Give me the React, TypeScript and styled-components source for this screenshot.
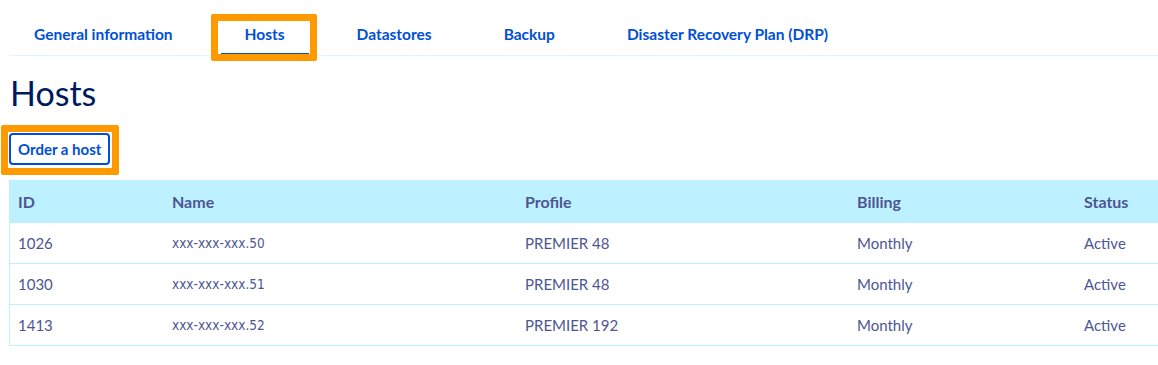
import React from "react";
import styled, { createGlobalStyle } from "styled-components";

const Global = createGlobalStyle`
  html, body { margin: 0; padding: 0; background: #fff; overflow: hidden; }
  body { font-family: Lato, "Noto Sans", "Liberation Sans", sans-serif; }
  * { box-sizing: border-box; }
`;

const Page = styled.div`
  padding-left: 9px;
  width: 1158px;
`;

const TabList = styled.nav`
  display: flex;
  gap: 24px;
  padding-left: 1px;
  border-bottom: 1px solid #e3f4fb;
`;

const Tab = styled.a<{ $active?: boolean }>`
  position: relative;
  display: block;
  padding: 24px 24px 9px;
  font-size: 15.5px;
  line-height: 20px;
  font-weight: 700;
  color: #0050d7;
  text-decoration: none;
  border-bottom: 3px solid ${(p) => (p.$active ? "#0050d7" : "transparent")};
  margin-bottom: -1px;
  white-space: nowrap;
`;

const Highlight = styled.span<{ $t: number; $r: number; $b: number; $l: number }>`
  position: absolute;
  top: ${(p) => p.$t}px;
  right: ${(p) => p.$r}px;
  bottom: ${(p) => p.$b}px;
  left: ${(p) => p.$l}px;
  border: 7px solid #ff9900;
  border-radius: 2px;
  pointer-events: none;
`;

const Title = styled.h1`
  margin: 15px 0 0 1px;
  font-size: 34px;
  line-height: 44px;
  font-weight: 400;
  color: #00185e;
`;

const ButtonWrap = styled.div`
  position: relative;
  display: inline-block;
  margin-top: 18px;
`;

const OutlineButton = styled.button`
  display: block;
  height: 32px;
  padding: 0 7px;
  border: 2px solid #0050d7;
  border-radius: 4px;
  background: #fff;
  color: #0050d7;
  font-family: Lato, "Noto Sans", sans-serif;
  font-size: 15px;
  font-weight: 700;
  line-height: 28px;
`;

const Table = styled.div`
  margin-top: 15px;
  border-left: 1px solid #bef1ff;
`;

const cols = "154px 353px 332px 227px 1fr";

const HeadRow = styled.div`
  display: grid;
  grid-template-columns: ${cols};
  height: 43px;
  align-items: center;
  background: #bef1ff;
  margin-left: -1px;
`;

const HeadCell = styled.div`
  padding-left: 9px;
  font-size: 16px;
  font-weight: 700;
  color: #4d5693;
`;

const Row = styled.div`
  display: grid;
  grid-template-columns: ${cols};
  height: 41px;
  align-items: center;
  border-bottom: 1px solid #bef1ff;
  margin-left: -1px;
  padding-left: 1px;
`;

const Cell = styled.div<{ $mono?: boolean }>`
  padding-left: 8px;
  font-family: ${(p) =>
    p.$mono
      ? '"DejaVu Sans Condensed", "DejaVu Sans", Verdana, sans-serif'
      : 'Lato, "Noto Sans", sans-serif'};
  font-size: ${(p) => (p.$mono ? 13.5 : 15)}px;
  color: #4d5693;
`;

const tabs = [
  "General information",
  "Hosts",
  "Datastores",
  "Backup",
  "Disaster Recovery Plan (DRP)",
];

const rows = [
  ["1026", "xxx-xxx-xxx.50", "PREMIER 48", "Monthly", "Active"],
  ["1030", "xxx-xxx-xxx.51", "PREMIER 48", "Monthly", "Active"],
  ["1413", "xxx-xxx-xxx.52", "PREMIER 192", "Monthly", "Active"],
];

export default function App() {
  return (
    <>
      <Global />
      <Page>
        <TabList>
          {tabs.map((t) => (
            <Tab key={t} $active={t === "Hosts"}>
              {t}
              {t === "Hosts" && <Highlight $t={14} $r={-8} $b={-8} $l={-10} />}
            </Tab>
          ))}
        </TabList>
        <Title>Hosts</Title>
        <ButtonWrap>
          <OutlineButton>Order a host</OutlineButton>
          <Highlight $t={-8} $r={-9} $b={-10} $l={-8} />
        </ButtonWrap>
        <Table>
          <HeadRow>
            {["ID", "Name", "Profile", "Billing", "Status"].map((h) => (
              <HeadCell key={h}>{h}</HeadCell>
            ))}
          </HeadRow>
          {rows.map((r) => (
            <Row key={r[0]}>
              {r.map((c, i) => (
                <Cell key={i} $mono={i === 1}>
                  {c}
                </Cell>
              ))}
            </Row>
          ))}
        </Table>
      </Page>
    </>
  );
}
